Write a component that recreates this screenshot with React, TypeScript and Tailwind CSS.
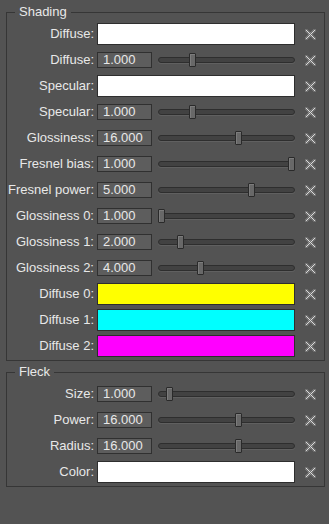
type Row =
  | { label: string; kind: 'color'; color: string }
  | { label: string; kind: 'num'; value: string; pos: number };

const shading: Row[] = [
  { label: 'Diffuse:', kind: 'color', color: '#ffffff' },
  { label: 'Diffuse:', kind: 'num', value: '1.000', pos: 31 },
  { label: 'Specular:', kind: 'color', color: '#ffffff' },
  { label: 'Specular:', kind: 'num', value: '1.000', pos: 31 },
  { label: 'Glossiness:', kind: 'num', value: '16.000', pos: 77 },
  { label: 'Fresnel bias:', kind: 'num', value: '1.000', pos: 130 },
  { label: 'Fresnel power:', kind: 'num', value: '5.000', pos: 90 },
  { label: 'Glossiness 0:', kind: 'num', value: '1.000', pos: 0 },
  { label: 'Glossiness 1:', kind: 'num', value: '2.000', pos: 19 },
  { label: 'Glossiness 2:', kind: 'num', value: '4.000', pos: 39 },
  { label: 'Diffuse 0:', kind: 'color', color: '#ffff00' },
  { label: 'Diffuse 1:', kind: 'color', color: '#00ffff' },
  { label: 'Diffuse 2:', kind: 'color', color: '#ff00ff' },
];

const fleck: Row[] = [
  { label: 'Size:', kind: 'num', value: '1.000', pos: 8 },
  { label: 'Power:', kind: 'num', value: '16.000', pos: 77 },
  { label: 'Radius:', kind: 'num', value: '16.000', pos: 77 },
  { label: 'Color:', kind: 'color', color: '#ffffff' },
];

function ResetIcon() {
  return (
    <svg width="11" height="11" viewBox="0 0 11 11">
      <defs>
        <pattern id="chk" width="2" height="2" patternUnits="userSpaceOnUse">
          <rect width="2" height="2" fill="#707070" />
          <rect width="1" height="1" fill="#dadada" />
          <rect x="1" y="1" width="1" height="1" fill="#dadada" />
        </pattern>
      </defs>
      <path d="M1.5 1.5 L9.5 9.5 M9.5 1.5 L1.5 9.5" stroke="url(#chk)" strokeWidth="2.4" strokeLinecap="square" />
    </svg>
  );
}

function Slider({ pos }: { pos: number }) {
  return (
    <div className="relative ml-[6px] h-[14px] w-[137px] flex items-center">
      <div className="h-[6px] w-full rounded-[3px] border border-[#2e2e2e] bg-[#424242] shadow-[0_1px_0_#606060]" />
      <div
        className="absolute top-0 h-[14px] w-[7px] rounded-[1px] border border-[#2a2a2a] bg-[#686868] shadow-[inset_1px_1px_0_#7c7c7c]"
        style={{ left: pos }}
      />
    </div>
  );
}

function FieldRow({ row }: { row: Row }) {
  return (
    <div className="flex h-[26px] items-center">
      <div className="w-[87px] text-right text-[#e8e8e8] whitespace-nowrap">{row.label}</div>
      <div className="ml-[3px] flex w-[198px] items-center">
        {row.kind === 'color' ? (
          <div className="h-[22px] w-full border border-[#2e2e2e]" style={{ backgroundColor: row.color }} />
        ) : (
          <>
            <div className="h-[16px] w-[55px] border border-[#303030] bg-[#5d5d5d] pl-[5px] text-[13px] leading-[14px] text-[#e8e8e8]">
              {row.value}
            </div>
            <Slider pos={row.pos} />
          </>
        )}
      </div>
      <div className="flex w-[29px] justify-center pl-[1px]">
        <ResetIcon />
      </div>
    </div>
  );
}

function Group({ title, rows, className }: { title: string; rows: Row[]; className: string }) {
  return (
    <fieldset className={`ml-[6px] w-[319px] border border-[#363636] px-0 pb-[1px] pt-[1px] ${className}`}>
      <legend className="ml-[8px] px-[4px] leading-[16px] text-[#e8e8e8]">{title}</legend>
      {rows.map((r, i) => (
        <FieldRow key={i} row={r} />
      ))}
    </fieldset>
  );
}

export default function App() {
  return (
    <div className="h-[524px] w-[329px] overflow-hidden bg-[#535353] text-[13px] font-['Liberation_Sans',Arial,sans-serif]">
      <Group title="Shading" rows={shading} className="mt-[4px]" />
      <Group title="Fleck" rows={fleck} className="mt-[3px]" />
    </div>
  );
}
